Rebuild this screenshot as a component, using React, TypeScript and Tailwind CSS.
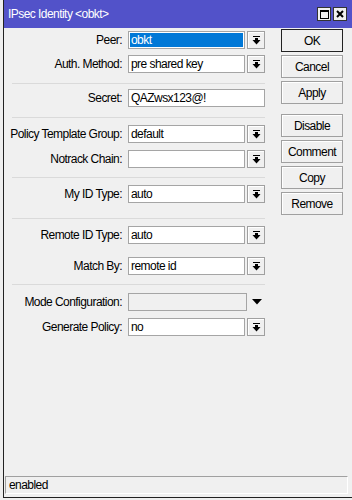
import type { ReactNode } from 'react'

const font = { fontFamily: '"Liberation Sans", Arial, sans-serif' }

function DropIcon() {
  return (
    <svg width="9" height="9" viewBox="0 0 9 9" fill="#000">
      <rect x="1" y="0" width="7" height="1" />
      <rect x="3" y="2" width="3" height="2" />
      <polygon points="0.5,4 8.5,4 4.5,8.5" />
    </svg>
  )
}

function DropButton() {
  return (
    <div className="ml-[2px] flex h-[18px] w-[18px] shrink-0 items-center justify-center border border-[#a0a0a0] bg-[#f0f0f0] shadow-[inset_1px_1px_0_#ffffff]">
      <DropIcon />
    </div>
  )
}

function Field({ label, children }: { label: string; children: ReactNode }) {
  return (
    <div className="flex h-[18px] items-center">
      <div className="w-[119px] shrink-0 whitespace-nowrap pr-[1px] text-right">{label}</div>
      <div className="ml-[5px] flex items-center">{children}</div>
    </div>
  )
}

function Input({ value, width = 117, selected = false, disabled = false }: { value?: string; width?: number; selected?: boolean; disabled?: boolean }) {
  return (
    <div
      className={`flex h-[18px] items-center whitespace-nowrap border border-[#a5a5a5] ${disabled ? 'bg-[#f0f0f0]' : 'bg-white'} ${selected ? 'p-px' : 'pl-[2px]'}`}
      style={{ width }}
    >
      {selected ? (
        <div className="flex h-full w-full items-center bg-[#0078d7] pl-px text-white">{value}</div>
      ) : (
        value
      )}
    </div>
  )
}

function Sep({ mt }: { mt: string }) {
  return <div className={`${mt} ml-[8px] h-px w-[253px] bg-[#dadada]`} />
}

function Btn({ label, primary = false, mt }: { label: string; primary?: boolean; mt: string }) {
  return (
    <div
      className={`${mt} flex h-[23px] w-[62px] items-center justify-center border ${primary ? 'border-[#222]' : 'border-[#a0a0a0] shadow-[inset_1px_1px_0_#ffffff]'} bg-[#f0f0f0]`}
    >
      {label}
    </div>
  )
}

export default function App() {
  return (
    <div className="h-[500px] w-[352px] overflow-hidden bg-[#eeeeee] text-[12px] tracking-[-0.55px] text-black" style={font}>
      <div className="ml-[3px] flex h-[498px] w-[349px] flex-col border-b border-l border-[#222] bg-[#f0f0f0]">
        {/* Title bar */}
        <div className="flex h-[28px] shrink-0 items-center bg-[#5252c9] pl-[4px] pr-[5px] text-white">
          <span>IPsec Identity &lt;obkt&gt;</span>
          <div className="ml-auto flex gap-[2px]">
            <div className="flex h-[14px] w-[14px] items-center justify-center border border-[#333] bg-[#f0f0f0]">
              <div className="h-[9px] w-[9px] border border-t-2 border-black" />
            </div>
            <div className="flex h-[14px] w-[14px] items-center justify-center border border-[#333] bg-[#f0f0f0]">
              <svg width="8" height="8" viewBox="0 0 8 8" stroke="#000" strokeWidth="2">
                <path d="M1 1L7 7M7 1L1 7" />
              </svg>
            </div>
          </div>
        </div>

        <div className="flex">
          {/* Form */}
          <div className="flex w-[262px] shrink-0 flex-col">
            <div className="mt-[3px]">
              <Field label="Peer:">
                <Input value="obkt" selected />
                <DropButton />
              </Field>
            </div>
            <div className="mt-[6px]">
              <Field label="Auth. Method:">
                <Input value="pre shared key" />
                <DropButton />
              </Field>
            </div>
            <Sep mt="mt-[10px]" />
            <div className="mt-[5px]">
              <Field label="Secret:">
                <Input value="QAZwsx123@!" width={137} />
              </Field>
            </div>
            <Sep mt="mt-[10px]" />
            <div className="mt-[7px]">
              <Field label="Policy Template Group:">
                <Input value="default" />
                <DropButton />
              </Field>
            </div>
            <div className="mt-[7px]">
              <Field label="Notrack Chain:">
                <Input />
                <DropButton />
              </Field>
            </div>
            <Sep mt="mt-[9px]" />
            <div className="mt-[7px]">
              <Field label="My ID Type:">
                <Input value="auto" />
                <DropButton />
              </Field>
            </div>
            <Sep mt="mt-[15px]" />
            <div className="mt-[7px]">
              <Field label="Remote ID Type:">
                <Input value="auto" />
                <DropButton />
              </Field>
            </div>
            <div className="mt-[13px]">
              <Field label="Match By:">
                <Input value="remote id" />
                <DropButton />
              </Field>
            </div>
            <Sep mt="mt-[9px]" />
            <div className="mt-[8px]">
              <Field label="Mode Configuration:">
                <Input width={119} disabled />
                <svg className="ml-[5px]" width="10" height="6" viewBox="0 0 10 6" fill="#000">
                  <polygon points="0,0 10,0 5,5.5" />
                </svg>
              </Field>
            </div>
            <div className="mt-[7px]">
              <Field label="Generate Policy:">
                <Input value="no" />
                <DropButton />
              </Field>
            </div>
          </div>

          {/* Buttons */}
          <div className="ml-[15px] flex flex-col">
            <Btn label="OK" primary mt="mt-[1px]" />
            <Btn label="Cancel" mt="mt-[3px]" />
            <Btn label="Apply" mt="mt-[3px]" />
            <Btn label="Disable" mt="mt-[10px]" />
            <Btn label="Comment" mt="mt-[3px]" />
            <Btn label="Copy" mt="mt-[3px]" />
            <Btn label="Remove" mt="mt-[3px]" />
          </div>
        </div>

        {/* Status bar */}
        <div className="mb-[3px] ml-[1px] mt-auto flex h-[18px] w-[343px] items-center border border-b-white border-l-[#a0a0a0] border-r-white border-t-[#a0a0a0] pl-[3px]">
          enabled
        </div>
      </div>
    </div>
  )
}
